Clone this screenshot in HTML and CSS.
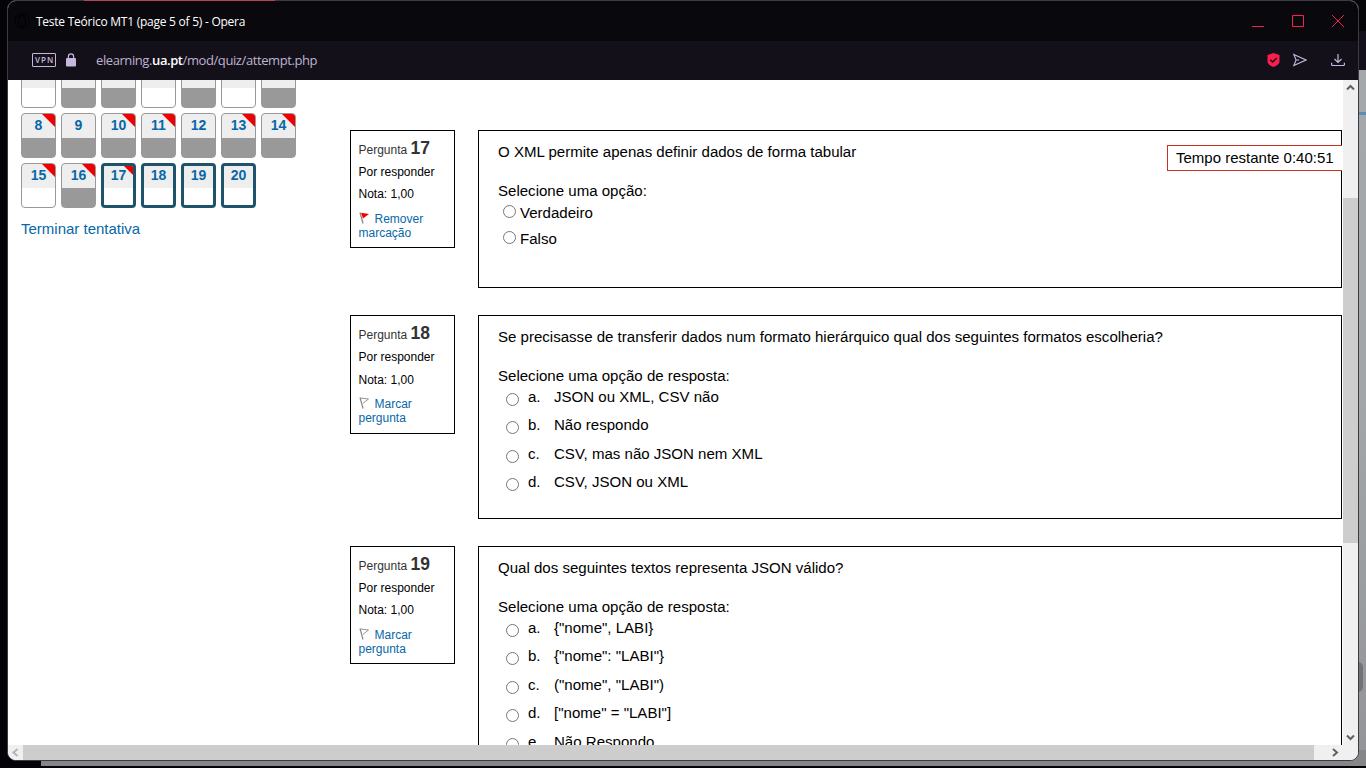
FILE: index.html
```
<!DOCTYPE html>
<html lang="pt">
<head>
<meta charset="utf-8">
<title>Teste Teórico MT1 (page 5 of 5)</title>
<link rel="stylesheet" href="styles.css">
</head>
<body>
<div class="desktop">
  <div class="behind-right"><i class="behind-line"></i><i class="behind-thumb"></i></div>
  <div class="behind-bottom"></div>
  <div class="window">
    <header class="titlebar">
      <svg class="opera" width="16" height="16" viewBox="0 0 16 16" fill="none" stroke="#000"><circle cx="8" cy="8" r="7.3"/><ellipse cx="8" cy="8" rx="3.5" ry="5.5"/></svg>
      <span class="title">Teste Teórico MT1 (page 5 of 5) - Opera</span>
      <svg class="controls" width="94" height="14" viewBox="0 0 94 14" fill="none" stroke="#fa1e4e" stroke-width="1"><path d="M0 12.5h12M40.5 1.5h11v11h-11zM80 1l12 12M92 1L80 13"/></svg>
    </header>
    <div class="addressbar">
      <span class="vpn">VPN</span>
      <svg class="lock" width="10" height="14" viewBox="0 0 10 14"><path d="M2.4 6V3.4a2.6 2.6 0 0 1 5.2 0V6" fill="none" stroke="#c5b8dc" stroke-width="1.2"/><rect y="5" width="10" height="8.5" rx="1" fill="#c5b8dc"/></svg>
      <span class="url">elearning.<b>ua.pt</b>/mod/quiz/attempt.php</span>
      <svg class="shield" width="13" height="14" viewBox="0 0 13 14"><path d="M6.5 0L12.500 2v6.500c0 2.600-3 4.300-6 5.500C3.500 12.800.5 11.100.5 8.500V2z" fill="#fa1e4e"/><path d="M3.300 6.800l2.300 2.300 4.200-4.100" fill="none" stroke="#13101a" stroke-width="1.400"/></svg>
      <svg class="send" width="14" height="14" viewBox="0 0 14 14" fill="none" stroke="#c5b8dc" stroke-width="1.100"><path d="M.8 1.500L13 7 .8 12.500 3.100 7zM3.100 7h3"/></svg>
      <svg class="download" width="14" height="14" viewBox="0 0 14 14" fill="none" stroke="#c5b8dc" stroke-width="1.200"><path d="M7 1v8.500M3.500 6L7 9.500 10.500 6M.6 9.800v1.700q0 1 1 1h10.800q1 0 1-1V9.800"/></svg>
    </div>
    <div class="body">
      <main class="page">
        <aside class="nav">
          <div class="buttons">
            <a class="qn"></a><a class="qn done"></a><a class="qn done"></a><a class="qn"></a><a class="qn done"></a><a class="qn"></a><a class="qn done"></a>
            <a class="qn done flagged">8</a><a class="qn done">9</a><a class="qn done flagged">10</a><a class="qn done flagged">11</a><a class="qn done">12</a><a class="qn done flagged">13</a><a class="qn done flagged">14</a>
            <a class="qn flagged">15</a><a class="qn done flagged">16</a><a class="qn current flagged">17</a><a class="qn current">18</a><a class="qn current">19</a><a class="qn current">20</a>
          </div>
          <a class="finish">Terminar tentativa</a>
        </aside>
        <div class="questions">
          <section class="question">
            <div class="info">
              <h3>Pergunta <b>17</b></h3><p>Por responder</p><p>Nota: 1,00</p>
              <a class="flag"><svg width="11" height="12" viewBox="0 0 11 12"><path d="M1 .5l3 11" fill="none" stroke="#888" stroke-width="1.300"/><path d="M2 .8L10 2 4 6.500z" fill="#f00000"/></svg>Remover marcação</a>
            </div>
            <div class="formulation truefalse">
              <p class="text">O XML permite apenas definir dados de forma tabular</p>
              <p class="prompt">Selecione uma opção:</p>
              <label class="tf"><i class="radio"></i>Verdadeiro</label>
              <label class="tf"><i class="radio"></i>Falso</label>
            </div>
          </section>
          <section class="question">
            <div class="info tall">
              <h3>Pergunta <b>18</b></h3><p>Por responder</p><p>Nota: 1,00</p>
              <a class="flag"><svg width="11" height="12" viewBox="0 0 11 12" fill="none" stroke="#888"><path d="M1 .5l3 11" stroke-width="1.200"/><path d="M1.500 1l8 1L4 6.300" stroke-width=".9"/></svg>Marcar pergunta</a>
            </div>
            <div class="formulation choices">
              <p class="text">Se precisasse de transferir dados num formato hierárquico qual dos seguintes formatos escolheria?</p>
              <p class="prompt">Selecione uma opção de resposta:</p>
              <label class="opt"><i class="radio"></i><span class="letter">a.</span>JSON ou XML, CSV não</label>
              <label class="opt"><i class="radio"></i><span class="letter">b.</span>Não respondo</label>
              <label class="opt"><i class="radio"></i><span class="letter">c.</span>CSV, mas não JSON nem XML</label>
              <label class="opt"><i class="radio"></i><span class="letter">d.</span>CSV, JSON ou XML</label>
            </div>
          </section>
          <section class="question">
            <div class="info">
              <h3>Pergunta <b>19</b></h3><p>Por responder</p><p>Nota: 1,00</p>
              <a class="flag"><svg width="11" height="12" viewBox="0 0 11 12" fill="none" stroke="#888"><path d="M1 .5l3 11" stroke-width="1.200"/><path d="M1.500 1l8 1L4 6.300" stroke-width=".9"/></svg>Marcar pergunta</a>
            </div>
            <div class="formulation last">
              <p class="text">Qual dos seguintes textos representa JSON válido?</p>
              <p class="prompt">Selecione uma opção de resposta:</p>
              <label class="opt"><i class="radio"></i><span class="letter">a.</span>{"nome", LABI}</label>
              <label class="opt"><i class="radio"></i><span class="letter">b.</span>{"nome": "LABI"}</label>
              <label class="opt"><i class="radio"></i><span class="letter">c.</span>("nome", "LABI")</label>
              <label class="opt"><i class="radio"></i><span class="letter">d.</span>["nome" = "LABI"]</label>
              <label class="opt"><i class="radio"></i><span class="letter">e.</span>Não Respondo</label>
            </div>
          </section>
        </div>
        <div class="timer">Tempo restante 0:40:51</div>
      </main>
      <div class="vscroll">
        <svg width="15" height="15" viewBox="0 0 15 15" fill="none" stroke="#606060" stroke-width="2"><path d="M4 9.500L7.500 6 11 9.500"/></svg>
        <i class="vthumb"></i>
        <svg width="15" height="15" viewBox="0 0 15 15" fill="none" stroke="#606060" stroke-width="2"><path d="M4 5.500L7.500 9 11 5.500"/></svg>
      </div>
      <div class="hscroll">
        <svg width="15" height="15" viewBox="0 0 15 15" fill="none" stroke="#b5b5b5" stroke-width="2"><path d="M9.500 4l-4 3.500 4 3.500"/></svg>
        <i class="hthumb"></i>
        <svg class="right-arrow" width="15" height="15" viewBox="0 0 15 15" fill="none" stroke="#606060" stroke-width="2"><path d="M5 4l4 3.500L5 11"/></svg>
      </div>
    </div>
  </div>
  <i class="tab-accent"></i>
</div>
</body>
</html>
```
FILE: styles.css
```
* { box-sizing: border-box; }
body { margin: 0; background: #040308; }
p, h3 { margin: 0; font-weight: normal; }
.desktop { position: relative; width: 1366px; height: 768px; overflow: hidden; background: #040308; }
.behind-right { position: absolute; right: 0; top: 0; width: 9px; height: 766px; background: linear-gradient(#060508 31px, #13101c 31px, #13101c 70px, #a5a8aa 70px, #a3a6a9 400px, #929497 766px); }
.behind-line { position: absolute; top: 112px; left: 0; width: 9px; height: 3px; background: #5b8db5; }
.behind-thumb { position: absolute; top: 662px; left: 0; width: 6px; height: 30px; background: #717477; border-radius: 0 5px 5px 0; }
.behind-bottom { position: absolute; left: 41px; right: 0; top: 750px; height: 16px; background: #858688; }
.window { position: absolute; left: 7px; top: 0; width: 1352px; height: 761px; border: 1px solid #3c3b3f; border-radius: 9px; overflow: hidden; background: #fff; }
.titlebar { display: flex; align-items: center; height: 40px; background: #09080c; padding: 0 12px 0 6px; }
.tab-accent { position: absolute; left: 84px; top: 0; width: 191px; height: 1px; background: #b84058; }
.title { margin-left: 6px; padding-top: 2px; color: #fff; font: 12px/16px "Open Sans", sans-serif; letter-spacing: -.25px; white-space: nowrap; }
.controls { margin-left: auto; }
.addressbar { display: flex; align-items: center; height: 39px; background: #13101a; padding: 0 13px 1px 24px; }
.vpn { width: 24px; height: 14px; border: 1px solid #c5b8dc; border-radius: 1px; color: #c5b8dc; font: 600 8px/12px "Open Sans", sans-serif; letter-spacing: 1px; padding-left: 2px; }
.lock { margin: 0 0 0 10px; }
.url { margin-left: 20px; color: #bfb3d0; font: 13px/18px "Open Sans", sans-serif; letter-spacing: -.41px; white-space: nowrap; }
.url b { color: #fff; font-weight: 600; }
.shield { margin-left: auto; }
.send { margin-left: 13px; }
.download { margin-left: 24px; }
.body { display: grid; grid-template: 665px 15px / 1335px 15px; }
.page { position: relative; display: flex; overflow: hidden; background: #fff; color: #000; font-family: "Liberation Sans", Arial, sans-serif; font-size: 15.050px; }
.nav { flex: none; width: 342px; padding-left: 13px; margin-top: -17px; }
.buttons { display: flex; flex-wrap: wrap; gap: 5px; width: 276px; }
.qn { position: relative; width: 35px; height: 45px; border: 1px solid #999; border-radius: 4px; background: linear-gradient(#eee 24px, #fff 24px); color: #0767a8; font-size: 14px; font-weight: bold; line-height: 23px; text-align: center; overflow: hidden; }
.done { background: linear-gradient(#eee 24px, #999 24px); }
.current { border: 3px solid #1f536b; background: linear-gradient(#eee 22px, #fff 22px); line-height: 19px; }
.flagged::after { content: ""; position: absolute; right: 0; top: 0; border-top: 13px solid #e00; border-left: 13px solid transparent; }
.current.flagged::after { border-top-width: 9px; border-left-width: 9px; }
.finish { display: block; margin-top: 12px; color: #0767a8; font-size: 15px; line-height: 18px; }
.questions { flex: none; width: 992px; padding-top: 50px; }
.question { display: flex; align-items: flex-start; gap: 23px; margin-bottom: 27px; }
.info { width: 105px; height: 118px; border: 1px solid #000; padding: 6px 6px 0 7.500px; font-size: 12px; }
.info h3 { font-size: 12px; line-height: 22px; color: #333; white-space: nowrap; }
.info b { font-size: 17.500px; }
.info p { line-height: 22px; }
.flag { display: block; margin-top: 7px; line-height: 14px; color: #0767a8; }
.tall { height: 119px; }
.tall p + p { margin-top: 1px; }
.tall .flag { margin-top: 6px; }
.flag svg { margin-right: 5px; vertical-align: -1px; }
.formulation { width: 864px; border: 1px solid #000; padding: 12px 19px 0; }
.truefalse { height: 158px; }
.choices { height: 204px; }
.last { height: 240px; }
.text, .prompt { line-height: 18px; }
.prompt { margin-top: 21px; }
.radio { flex: none; width: 13px; height: 13px; border: 1px solid #767676; border-radius: 50%; background: #fff; }
.tf { display: flex; height: 26px; padding-left: 5px; gap: 4px; line-height: 26px; }
.tf .radio { margin-top: 5px; }
.opt { display: flex; height: 28.400px; padding-left: 8px; line-height: 24.400px; }
.opt .radio { margin: 8px 9px 0 0; }
.letter { width: 26px; }
.timer { position: absolute; right: 1px; top: 65px; width: 175px; height: 26px; border: 1px solid #ca3120; border-right: 0; padding-left: 8px; background: #fff; font-size: 15px; line-height: 24px; white-space: nowrap; }
.vscroll { display: flex; flex-direction: column; background: #f0f0f0; }
.vscroll svg, .hscroll svg { flex: none; }
.vthumb { height: 345px; margin: 103px 0 187px; background: #cdcdcd; flex: none; }
.hscroll { grid-column: 1 / 3; display: flex; background: #f0f0f0; }
.hthumb { width: 1291px; background: #cdcdcd; }
.right-arrow { margin-left: 14px; }
```
